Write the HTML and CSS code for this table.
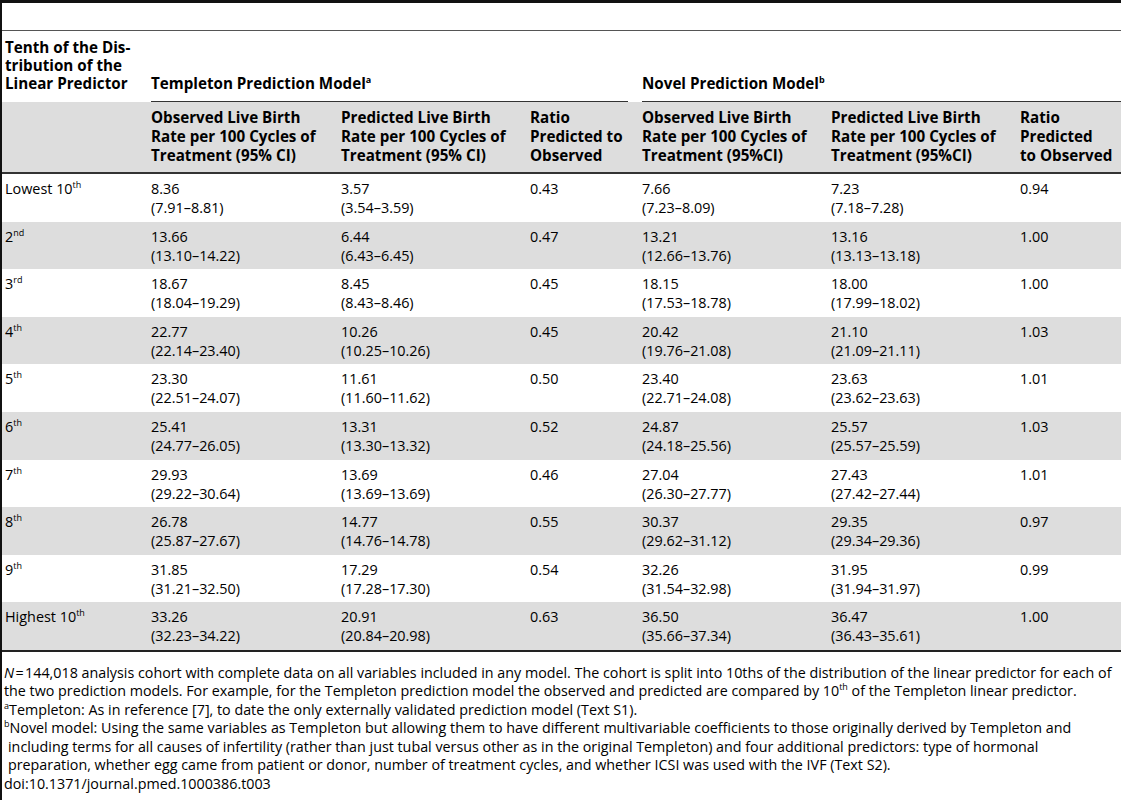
FILE: index.html
```html
<!DOCTYPE html>
<html lang="en">
<head>
  <meta charset="UTF-8">
  <title>Table 3 - Observed and predicted live birth rates</title>
  <link rel="stylesheet" href="styles.css">
</head>
<body>
  <div class="page">
    <div class="caption-area"></div>

    <table class="data-table">
      <colgroup>
        <col class="c-tenth">
        <col class="c-rate-first">
        <col class="c-rate">
        <col class="c-ratio">
        <col class="c-rate">
        <col class="c-rate">
        <col class="c-ratio-last">
      </colgroup>
      <thead>
        <tr class="group-row">
          <th class="tenth-head">Tenth of the Dis-<br>tribution of the<br>Linear Predictor</th>
          <th colspan="3"><div class="group-title">Templeton Prediction Model<sup>a</sup></div></th>
          <th colspan="3"><div class="group-title last">Novel Prediction Model<sup>b</sup></div></th>
        </tr>
        <tr class="sub-row">
          <th></th>
          <th>Observed Live Birth<br>Rate per 100 Cycles of<br>Treatment (95% CI)</th>
          <th>Predicted Live Birth<br>Rate per 100 Cycles of<br>Treatment (95% CI)</th>
          <th>Ratio<br>Predicted to<br>Observed</th>
          <th>Observed Live Birth<br>Rate per 100 Cycles of<br>Treatment (95%CI)</th>
          <th>Predicted Live Birth<br>Rate per 100 Cycles of<br>Treatment (95%CI)</th>
          <th>Ratio<br>Predicted<br>to Observed</th>
        </tr>
      </thead>
      <tbody>
        <tr>
          <td>Lowest 10<sup>th</sup></td>
          <td>8.36<br>(7.91–8.81)</td>
          <td>3.57<br>(3.54–3.59)</td>
          <td>0.43</td>
          <td>7.66<br>(7.23–8.09)</td>
          <td>7.23<br>(7.18–7.28)</td>
          <td>0.94</td>
        </tr>
        <tr>
          <td>2<sup>nd</sup></td>
          <td>13.66<br>(13.10–14.22)</td>
          <td>6.44<br>(6.43–6.45)</td>
          <td>0.47</td>
          <td>13.21<br>(12.66–13.76)</td>
          <td>13.16<br>(13.13–13.18)</td>
          <td>1.00</td>
        </tr>
        <tr>
          <td>3<sup>rd</sup></td>
          <td>18.67<br>(18.04–19.29)</td>
          <td>8.45<br>(8.43–8.46)</td>
          <td>0.45</td>
          <td>18.15<br>(17.53–18.78)</td>
          <td>18.00<br>(17.99–18.02)</td>
          <td>1.00</td>
        </tr>
        <tr>
          <td>4<sup>th</sup></td>
          <td>22.77<br>(22.14–23.40)</td>
          <td>10.26<br>(10.25–10.26)</td>
          <td>0.45</td>
          <td>20.42<br>(19.76–21.08)</td>
          <td>21.10<br>(21.09–21.11)</td>
          <td>1.03</td>
        </tr>
        <tr>
          <td>5<sup>th</sup></td>
          <td>23.30<br>(22.51–24.07)</td>
          <td>11.61<br>(11.60–11.62)</td>
          <td>0.50</td>
          <td>23.40<br>(22.71–24.08)</td>
          <td>23.63<br>(23.62–23.63)</td>
          <td>1.01</td>
        </tr>
        <tr>
          <td>6<sup>th</sup></td>
          <td>25.41<br>(24.77–26.05)</td>
          <td>13.31<br>(13.30–13.32)</td>
          <td>0.52</td>
          <td>24.87<br>(24.18–25.56)</td>
          <td>25.57<br>(25.57–25.59)</td>
          <td>1.03</td>
        </tr>
        <tr>
          <td>7<sup>th</sup></td>
          <td>29.93<br>(29.22–30.64)</td>
          <td>13.69<br>(13.69–13.69)</td>
          <td>0.46</td>
          <td>27.04<br>(26.30–27.77)</td>
          <td>27.43<br>(27.42–27.44)</td>
          <td>1.01</td>
        </tr>
        <tr>
          <td>8<sup>th</sup></td>
          <td>26.78<br>(25.87–27.67)</td>
          <td>14.77<br>(14.76–14.78)</td>
          <td>0.55</td>
          <td>30.37<br>(29.62–31.12)</td>
          <td>29.35<br>(29.34–29.36)</td>
          <td>0.97</td>
        </tr>
        <tr>
          <td>9<sup>th</sup></td>
          <td>31.85<br>(31.21–32.50)</td>
          <td>17.29<br>(17.28–17.30)</td>
          <td>0.54</td>
          <td>32.26<br>(31.54–32.98)</td>
          <td>31.95<br>(31.94–31.97)</td>
          <td>0.99</td>
        </tr>
        <tr>
          <td>Highest 10<sup>th</sup></td>
          <td>33.26<br>(32.23–34.22)</td>
          <td>20.91<br>(20.84–20.98)</td>
          <td>0.63</td>
          <td>36.50<br>(35.66–37.34)</td>
          <td>36.47<br>(36.43–35.61)</td>
          <td>1.00</td>
        </tr>
      </tbody>
    </table>

    <!-- Footnotes -->
    <div class="notes">
      <p><i>N</i>&#8202;=&#8202;144,018 analysis cohort with complete data on all variables included in any model. The cohort is split into 10ths of the distribution of the linear predictor for each of<br>the two prediction models. For example, for the Templeton prediction model the observed and predicted are compared by 10<sup>th</sup> of the Templeton linear predictor.</p>
      <p><sup>a</sup>Templeton: As in reference [7], to date the only externally validated prediction model (Text S1).</p>
      <p class="hang"><sup>b</sup>Novel model: Using the same variables as Templeton but allowing them to have different multivariable coefficients to those originally derived by Templeton and<br>including terms for all causes of infertility (rather than just tubal versus other as in the original Templeton) and four additional predictors: type of hormonal<br>preparation, whether egg came from patient or donor, number of treatment cycles, and whether ICSI was used with the IVF (Text S2).</p>
      <p>doi:10.1371/journal.pmed.1000386.t003</p>
    </div>
  </div>
</body>
</html>
```

FILE: styles.css
```css
* {
  margin: 0;
  padding: 0;
  box-sizing: border-box;
}
body {
  font-family: "Open Sans", "Noto Sans", Arial, sans-serif;
  font-size: 14.4px;
  color: #000;
  background-color: #fff;
}
.page {
  border-left: 2px solid #111;
  min-height: 800px;
}
.caption-area {
  height: 31px;
  border-top: 3px solid #111;
  border-bottom: 1px solid #555;
}
.data-table {
  width: 1119px;
  table-layout: fixed;
  border-collapse: collapse;
  line-height: 19px;
}
.c-tenth { width: 146px; }
.c-rate-first { width: 190px; }
.c-rate { width: 189px; }
.c-ratio { width: 112px; }
.c-ratio-last { width: 104px; }
th {
  text-align: left;
  font-weight: bold;
  font-size: 15.2px;
  vertical-align: top;
  white-space: nowrap;
  padding: 0 2px 0 3px;
}
sup {
  font-size: 9px;
  line-height: 0;
  vertical-align: 6px;
}
.group-row th {
  vertical-align: bottom;
  padding-top: 7px;
  line-height: 18px;
}
.group-row .group-title {
  border-bottom: 1px solid #333;
  padding-bottom: 9px;
  margin-right: 9px;
}
.group-row .group-title.last {
  margin-right: -2px;
}
.tenth-head {
  padding-bottom: 10px;
}
.sub-row th {
  background-color: #dddddd;
  padding-top: 6px;
  padding-bottom: 7px;
  border-bottom: 2px solid #333;
}
td {
  vertical-align: top;
  padding: 5px 3px 4.6px 3px;
}
tbody tr:nth-child(even) td {
  background-color: #dddddd;
}
tbody tr:last-child td {
  border-bottom: 2px solid #222;
}
.notes {
  padding: 12px 0 0 2px;
  font-size: 14.3px;
  line-height: 18.5px;
  white-space: nowrap;
}
.notes p.hang {
  padding-left: 4px;
  text-indent: -4px;
}
```
